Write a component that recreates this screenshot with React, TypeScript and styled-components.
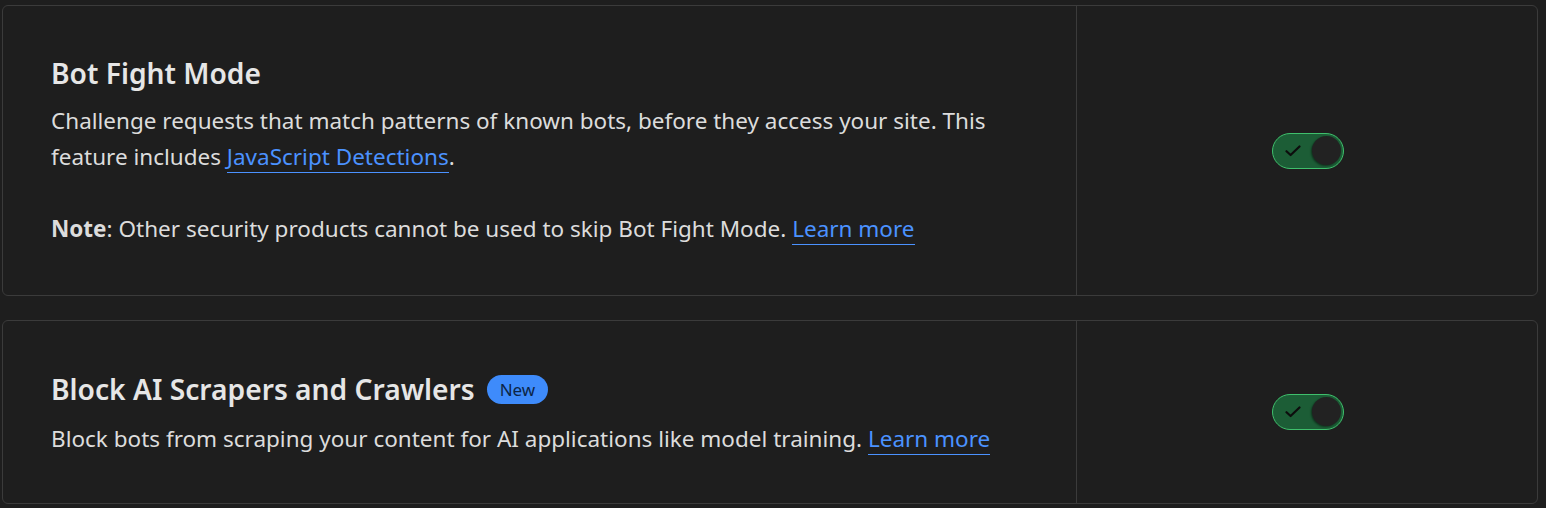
import styled, { createGlobalStyle } from 'styled-components';

const GlobalStyle = createGlobalStyle`
  body {
    margin: 0;
    background: #1e1e1e;
    font-family: 'Noto Sans', 'Open Sans', sans-serif;
    color: #dedede;
  }
`;

const Page = styled.div`
  display: flex;
  flex-direction: column;
  gap: 24px;
  padding: 5px 8px 0 2px;
`;

const Card = styled.section`
  display: grid;
  grid-template-columns: 1fr 461px;
  border: 1px solid #3b3b3b;
  border-radius: 6px;
  background: #1e1e1e;
`;

const Content = styled.div<{ $top: number; $bottom: number }>`
  display: flex;
  flex-direction: column;
  gap: 12px;
  padding: ${(p) => p.$top}px 60px ${(p) => p.$bottom}px 48px;
`;

const TitleRow = styled.div`
  display: flex;
  align-items: center;
  gap: 12px;
  margin-bottom: 2px;
`;

const Title = styled.h3`
  margin: 0;
  font-size: 28.2px;
  line-height: 36px;
  font-weight: 600;
  color: #e6e6e6;
`;

const Badge = styled.span`
  display: inline-flex;
  align-items: center;
  justify-content: center;
  height: 29px;
  padding: 0 13px;
  border-radius: 15px;
  background: #3e8bfb;
  color: #0c2547;
  font-size: 17px;
`;

const Text = styled.p`
  margin: 0;
  font-size: 22.5px;
  line-height: 36px;
  color: #dcdcdc;

  & + & {
    margin-top: 36px;
  }
`;

const Link = styled.a`
  color: #4b92ff;
  text-decoration: none;
  border-bottom: 1px solid #4b92ff;
`;

const Side = styled.div`
  display: flex;
  align-items: center;
  justify-content: center;
  padding-left: 2px;
  border-left: 1px solid #3b3b3b;
`;

const Toggle = styled.button`
  position: relative;
  width: 72px;
  height: 36px;
  padding: 0;
  border: 1.5px solid #3fbf6c;
  border-radius: 18px;
  background: #1c5d36;
  cursor: pointer;
`;

const Knob = styled.span`
  position: absolute;
  top: 2px;
  right: 2px;
  width: 29px;
  height: 29px;
  border-radius: 50%;
  background: #222222;
  box-shadow: -1px 1px 2px rgba(0, 0, 0, 0.45);
`;

const Check = styled.svg`
  position: absolute;
  left: 12px;
  top: 11px;
`;

const Switch = () => (
  <Toggle aria-pressed="true">
    <Check width="16" height="12" viewBox="0 0 16 12" fill="none">
      <path d="M1.5 6.2 L5.6 10 L14.5 1.5" stroke="#0d0d0d" strokeWidth="2.2" strokeLinecap="round" strokeLinejoin="round" />
    </Check>
    <Knob />
  </Toggle>
);

export default function App() {
  return (
    <>
      <GlobalStyle />
      <Page>
        <Card>
          <Content $top={49} $bottom={48}>
            <Title>Bot Fight Mode</Title>
            <div>
              <Text>
                Challenge requests that match patterns of known bots, before they access your site. This feature
                includes <Link href="#">JavaScript Detections</Link>.
              </Text>
              <Text>
                <b>Note</b>: Other security products cannot be used to skip Bot Fight Mode.{' '}
                <Link href="#">Learn more</Link>
              </Text>
            </div>
          </Content>
          <Side>
            <Switch />
          </Side>
        </Card>
        <Card>
          <Content $top={50} $bottom={46}>
            <TitleRow>
              <Title>Block AI Scrapers and Crawlers</Title>
              <Badge>New</Badge>
            </TitleRow>
            <Text>
              Block bots from scraping your content for AI applications like model training.{' '}
              <Link href="#">Learn more</Link>
            </Text>
          </Content>
          <Side>
            <Switch />
          </Side>
        </Card>
      </Page>
    </>
  );
}
